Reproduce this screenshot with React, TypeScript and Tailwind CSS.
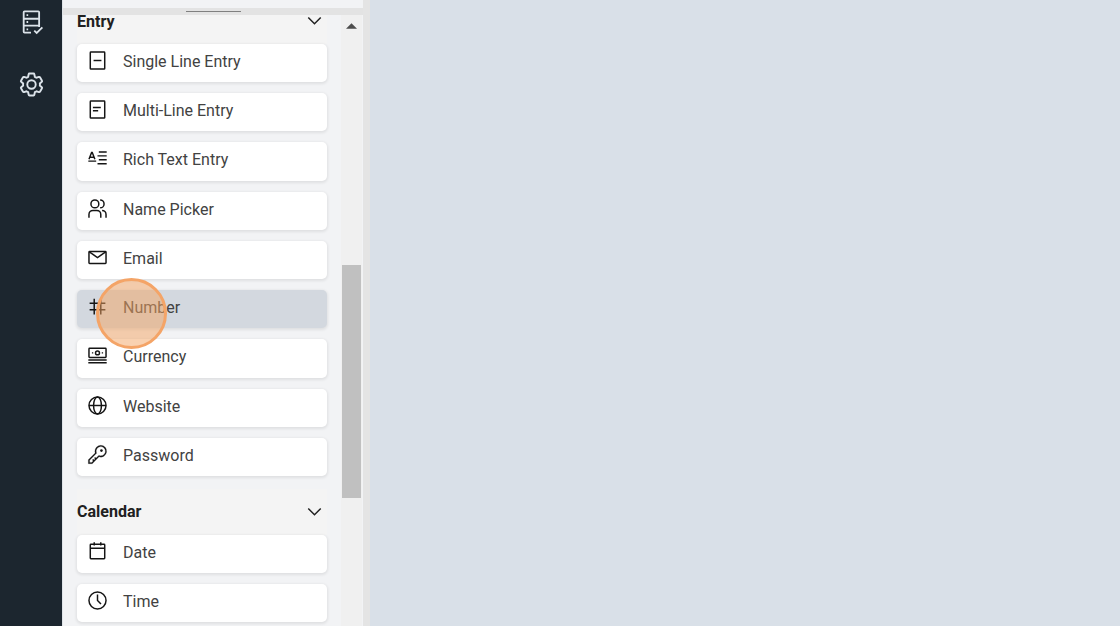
import type { ReactNode } from 'react'

interface Field {
  label: string
  icon: ReactNode
  active?: boolean
}

const entryFields: Field[] = [
  {
    label: 'Single Line Entry',
    icon: <><rect x="5" y="3" width="22" height="26" rx="1" /><path d="M10 16h12" /></>
  },
  {
    label: 'Multi-Line Entry',
    icon: <><rect x="5" y="3" width="22" height="26" rx="1" /><path d="M9 13h12M9 18h8" /></>
  },
  {
    label: 'Rich Text Entry',
    icon: <path d="M3 17l4-10h1l4 10M4.5 14h6M2 20h12M18 6h12M16 12h14M18 18h12M16 24h14" />
  },
  {
    label: 'Name Picker',
    icon: (
      <>
        <circle cx="12" cy="9" r="6" />
        <path d="M3 30v-5a6 6 0 0 1 6-6h6a6 6 0 0 1 6 6v5M20 3a6 6 0 0 1 0 12M23 19a6 6 0 0 1 6 6v5" />
      </>
    )
  },
  {
    label: 'Email',
    icon: <><rect x="3" y="7" width="26" height="18" rx="1" /><path d="M3.5 7.5L16 16l12.500-8.500" /></>
  },
  {
    label: 'Number',
    active: true,
    icon: <path d="M11 4v24M21 4v24M4 11h24M4 21h24" />
  },
  {
    label: 'Currency',
    icon: (
      <>
        <rect x="3" y="5" width="26" height="14" rx="1" />
        <circle cx="16" cy="12" r="3" />
        <path d="M2 23h28M2 27h28M7.500 12h2M22.500 12h2" />
      </>
    )
  },
  {
    label: 'Website',
    icon: <><circle cx="16" cy="16" r="13" /><ellipse cx="16" cy="16" rx="6" ry="13" /><path d="M3 16h26" /></>
  },
  {
    label: 'Password',
    icon: (
      <>
        <path
          fill="currentColor"
          strokeWidth="0.3"
          d="M21,2a9,9,0,0,0-9,9,8.87,8.87,0,0,0,.39,2.61L2,24v6H8L18.39,19.61A9,9,0,1,0,21,2Zm0,16a7,7,0,0,1-2-.3l-1.15-.35L17,18.2l-3.18,3.18L12.41,20,11,21.41l1.38,1.38-1.59,1.59L9.41,23,8,24.41l1.38,1.38L7.17,28H4V24.83L13.8,15l.85-.85-.29-.95A7,7,0,1,1,21,18Z"
        />
        <circle cx="22" cy="10" r="2" fill="currentColor" stroke="none" />
      </>
    )
  }
]

const calendarFields: Field[] = [
  {
    label: 'Date',
    icon: <><rect x="5" y="5" width="22" height="22" rx="1" /><path d="M5 11h22M11 2v5M21 2v5" /></>
  },
  {
    label: 'Time',
    icon: <><circle cx="16" cy="16" r="13" /><path d="M16 7v9l5.300 5.300" /></>
  }
]

export default function App() {
  return (
    <div className="flex h-screen overflow-hidden bg-[#d9e0e8] font-['Roboto','Liberation_Sans',sans-serif]">
      <nav className="flex w-[62px] shrink-0 flex-col items-center gap-9 bg-[#1c262f] pt-[9px] text-[#dce3ea]">
        <button aria-label="Forms">
          <Icon className="size-[26px]">
            <path d="M16 29H8a1 1 0 0 1-1-1V4a1 1 0 0 1 1-1h17a1 1 0 0 1 1 1v18M7 12h19M7 20.500h19M20 26.500l3 3 7-7" />
            <path d="M10.500 7.500h2M10.500 16h2M10.500 25h2" />
          </Icon>
        </button>
        <button aria-label="Settings">
          <Icon className="size-[27px]">
            <path d="M18.360 3a1 1 0 0 1 1 .8l.6 3.050a10 10 0 0 1 2 1.150l2.900-1a1 1 0 0 1 1.200.5l2.360 4a1 1 0 0 1-.2 1.260l-2.300 2.030a10 10 0 0 1 0 2.420l2.300 2.030a1 1 0 0 1 .2 1.260l-2.360 4a1 1 0 0 1-1.200.5l-2.900-1a10 10 0 0 1-2 1.150l-.6 3.050a1 1 0 0 1-1 .8h-4.720a1 1 0 0 1-1-.8l-.6-3.050a10 10 0 0 1-2-1.150l-2.900 1a1 1 0 0 1-1.200-.5l-2.360-4a1 1 0 0 1 .2-1.260l2.300-2.030a10 10 0 0 1 0-2.420l-2.300-2.030a1 1 0 0 1-.2-1.260l2.360-4a1 1 0 0 1 1.200-.5l2.900 1a10 10 0 0 1 2-1.150l.6-3.050a1 1 0 0 1 1-.8z" />
            <circle cx="16" cy="16" r="5" />
          </Icon>
        </button>
      </nav>

      <aside className="flex w-[308px] shrink-0 flex-col border-r-[7px] border-l border-r-[#e4e4e4] border-l-[#dfe4e8] bg-[#f2f3f5]">
        {/* resize handle between the two panes */}
        <div className="mt-2 flex h-[7px] shrink-0 items-center justify-center bg-[#e3e3e3]">
          <div className="h-px w-[55px] bg-[#808080]" />
        </div>

        <div className="flex min-h-0 flex-1">
          <div className="flex-1 px-3.5">
            <Section title="Entry" headerClass="h-[29px] pb-4" listClass="min-h-[432px]" fields={entryFields} />
            <Section title="Calendar" headerClass="mt-[13px] h-[46px]" listClass="min-h-[87px]" fields={calendarFields} />
          </div>

          <div className="mr-px flex w-[21px] shrink-0 flex-col items-center bg-[#f0f0f0]">
            <button aria-label="Scroll up" className="flex h-[22px] w-full items-center justify-center">
              <svg className="h-1.5 w-[11px]" viewBox="0 0 12 6">
                <path d="M0 6l6-6 6 6z" fill="#4d4d4d" />
              </svg>
            </button>
            <div className="mt-[228px] h-[233px] w-[19px] bg-[#c0c0c0]" />
          </div>
        </div>
      </aside>

      <main className="flex-1" />
    </div>
  )
}

function Section({ title, headerClass, listClass, fields }: {
  title: string; headerClass: string; listClass: string; fields: Field[]
}) {
  return (
    <section>
      <h2>
        <button
          aria-expanded="true"
          className={`${headerClass} flex w-full items-center justify-between bg-[#f4f4f4] pr-0.5 text-base leading-4 font-bold text-[#202020]`}
        >
          {title}
          <Icon className="size-[21px]">
            <path d="M6.500 10l9.500 9.500 9.500-9.500" />
          </Icon>
        </button>
      </h2>
      <ul className={`${listClass} grid auto-rows-fr gap-[11px]`}>
        {fields.map(field => (
          <FieldRow key={field.label} field={field} />
        ))}
      </ul>
    </section>
  )
}

function FieldRow({ field }: { field: Field }) {
  return (
    <li className="relative flex">
      <button
        className={`flex min-h-[38px] w-full items-start gap-[15px] rounded-[5px] pt-1.5 pl-2.5 text-left text-base text-[#424242] shadow-[0_1px_3px_1px_#00000014] ${
          field.active ? 'bg-[#d3d8df]' : 'bg-white'
        }`}
      >
        <Icon className="size-[21px] text-[#151515]">{field.icon}</Icon>
        {field.label}
      </button>
      {/* click marker */}
      {field.active && (
        <span className="pointer-events-none absolute -top-3 left-[19px] z-10 size-[71px] rounded-full border-[3px] border-[#f4a467] bg-[#f4a462]/50" />
      )}
    </li>
  )
}

function Icon({ className, children }: { className: string; children: ReactNode }) {
  return (
    <svg
      className={`${className} shrink-0`}
      viewBox="0 0 32 32"
      fill="none"
      stroke="currentColor"
      strokeWidth="2.25"
      aria-hidden="true"
    >
      {children}
    </svg>
  )
}
